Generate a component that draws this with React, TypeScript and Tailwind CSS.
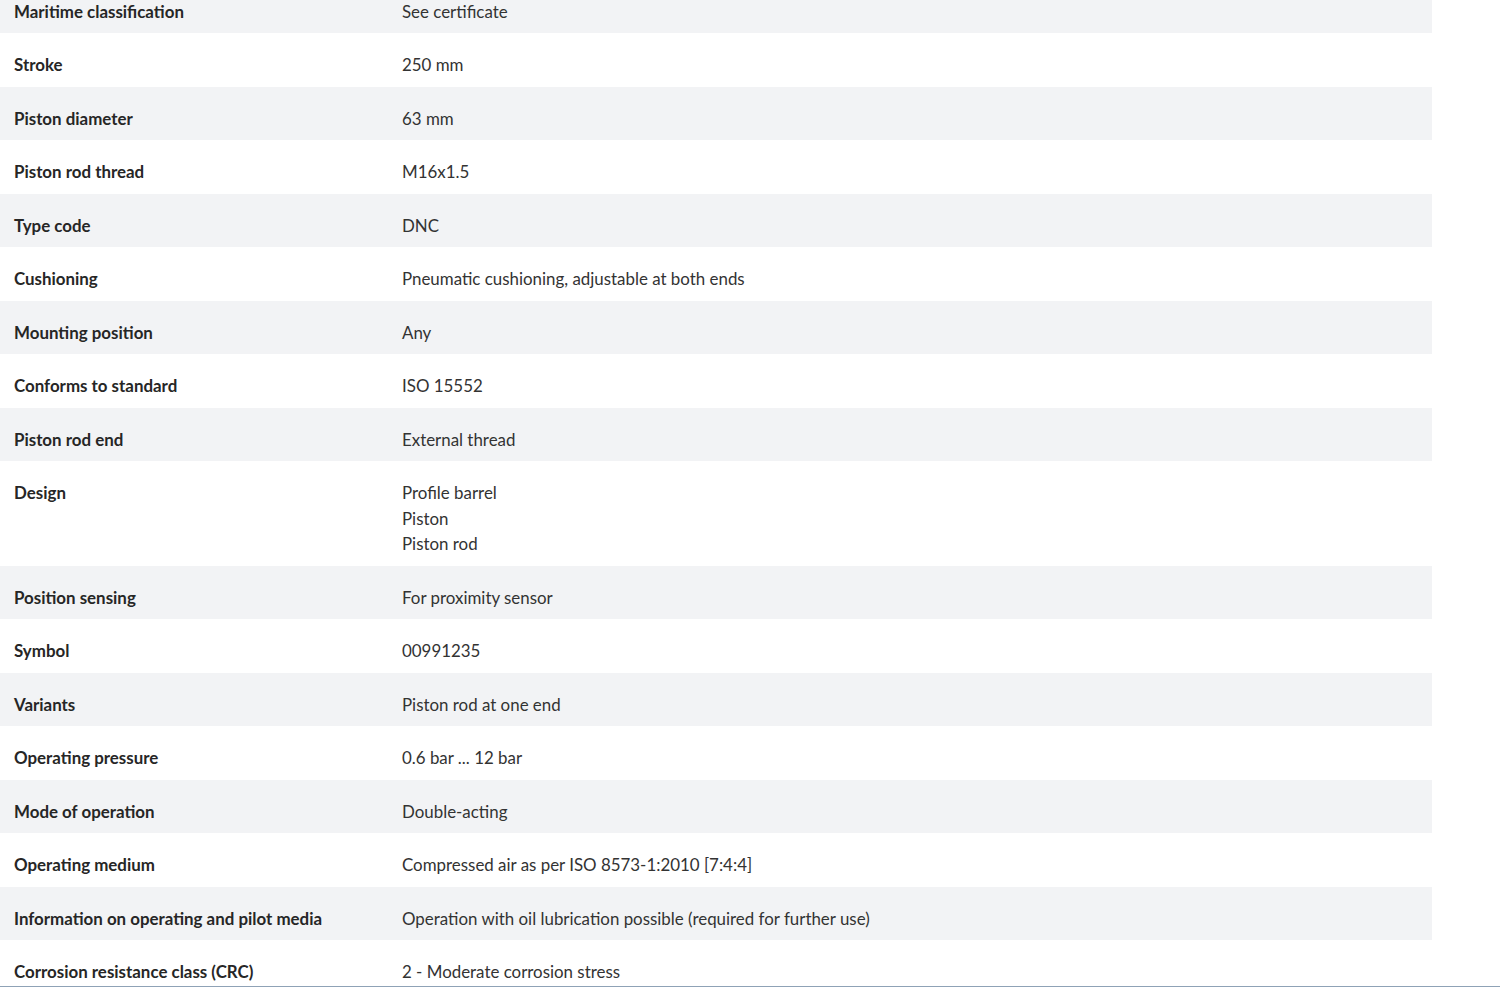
import React from "react";

const rows: { label: string; value: string[] }[] = [
  { label: "Maritime classification", value: ["See certificate"] },
  { label: "Stroke", value: ["250 mm"] },
  { label: "Piston diameter", value: ["63 mm"] },
  { label: "Piston rod thread", value: ["M16x1.5"] },
  { label: "Type code", value: ["DNC"] },
  { label: "Cushioning", value: ["Pneumatic cushioning, adjustable at both ends"] },
  { label: "Mounting position", value: ["Any"] },
  { label: "Conforms to standard", value: ["ISO 15552"] },
  { label: "Piston rod end", value: ["External thread"] },
  { label: "Design", value: ["Profile barrel", "Piston", "Piston rod"] },
  { label: "Position sensing", value: ["For proximity sensor"] },
  { label: "Symbol", value: ["00991235"] },
  { label: "Variants", value: ["Piston rod at one end"] },
  { label: "Operating pressure", value: ["0.6 bar ... 12 bar"] },
  { label: "Mode of operation", value: ["Double-acting"] },
  { label: "Operating medium", value: ["Compressed air as per ISO 8573-1:2010 [7:4:4]"] },
  { label: "Information on operating and pilot media", value: ["Operation with oil lubrication possible (required for further use)"] },
  { label: "Corrosion resistance class (CRC)", value: ["2 - Moderate corrosion stress"] },
];

export default function App() {
  return (
    <div className="flex h-[987px] w-[1500px] flex-col overflow-hidden bg-white font-['Lato',sans-serif] text-[16.9px] text-[#333333]">
      <div className="flex-1 overflow-hidden">
        <div className="mt-[-20.5px] w-[1432px]">
          {rows.map((r, i) => (
            <div
              key={r.label}
              className={`flex pt-[19px] pb-[9px] leading-[25.5px] ${i % 2 === 0 ? "bg-[#f2f3f5]" : "bg-white"}`}
            >
              <div className="w-[402px] shrink-0 pl-[14px] font-bold text-[#262626]">{r.label}</div>
              <div className="flex flex-col">
                {r.value.map((v) => (
                  <span key={v}>{v}</span>
                ))}
              </div>
            </div>
          ))}
        </div>
      </div>
      <div className="h-px shrink-0 bg-[#8fa2b6]" />
    </div>
  );
}
